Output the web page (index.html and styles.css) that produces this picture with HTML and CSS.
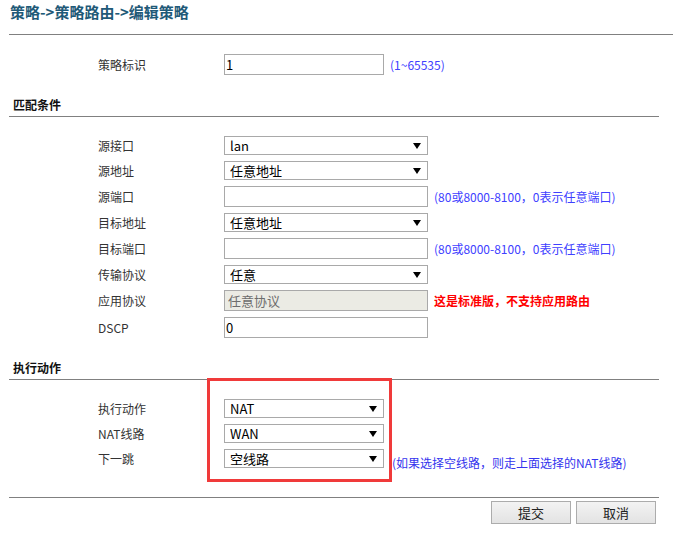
FILE: index.html
```html
<!DOCTYPE html>
<html lang="zh-CN">
<head>
    <meta charset="UTF-8">
    <title>编辑策略</title>
    <link rel="stylesheet" href="styles.css">
</head>
<body>
    <div class="page">
        <div class="title">策略-&gt;策略路由-&gt;编辑策略</div>

        <div class="section id-section">
            <div class="row row-input">
                <span class="label">策略标识</span>
                <input class="field short" type="text" value="1">
                <span class="hint">(1~65535)</span>
            </div>
        </div>

        <div class="section">
            <div class="heading">匹配条件</div>
            <div class="body">
                <div class="row">
                    <span class="label">源接口</span>
                    <div class="sel"><select><option>lan</option></select></div>
                </div>
                <div class="row">
                    <span class="label">源地址</span>
                    <div class="sel"><select><option>任意地址</option></select></div>
                </div>
                <div class="row row-input">
                    <span class="label">源端口</span>
                    <input class="field" type="text" value="">
                    <span class="hint">(80或8000-8100，0表示任意端口)</span>
                </div>
                <div class="row">
                    <span class="label">目标地址</span>
                    <div class="sel"><select><option>任意地址</option></select></div>
                </div>
                <div class="row row-input">
                    <span class="label">目标端口</span>
                    <input class="field" type="text" value="">
                    <span class="hint">(80或8000-8100，0表示任意端口)</span>
                </div>
                <div class="row">
                    <span class="label">传输协议</span>
                    <div class="sel"><select><option>任意</option></select></div>
                </div>
                <div class="row row-input">
                    <span class="label">应用协议</span>
                    <input class="field" type="text" value="任意协议" disabled>
                    <span class="warn">这是标准版，不支持应用路由</span>
                </div>
                <div class="row row-input">
                    <span class="label">DSCP</span>
                    <input class="field" type="text" value="0">
                </div>
            </div>
        </div>

        <div class="section action-section">
            <div class="heading">执行动作</div>
            <div class="body body-last">
                <div class="row">
                    <span class="label">执行动作</span>
                    <div class="sel short"><select><option>NAT</option></select></div>
                </div>
                <div class="row">
                    <span class="label">NAT线路</span>
                    <div class="sel short"><select><option>WAN</option></select></div>
                </div>
                <div class="row">
                    <span class="label">下一跳</span>
                    <div class="sel short"><select><option>空线路</option></select></div>
                    <span class="hint tight">(如果选择空线路，则走上面选择的NAT线路)</span>
                </div>
            </div>
            <div class="mark"></div>
        </div>

        <div class="buttons">
            <button type="button">提交</button>
            <button type="button">取消</button>
        </div>
    </div>
</body>
</html>
```

FILE: styles.css
```css
body {
    margin: 0;
    padding: 0;
    font-family: "Noto Sans CJK SC", "Liberation Sans", sans-serif;
    font-size: 12px;
    color: #333;
    background: #fff;
}

.page {
    margin-left: 9px;
}

.title {
    width: 664px;
    height: 34px;
    line-height: 24px;
    padding-left: 1px;
    box-sizing: border-box;
    border-bottom: 1px solid #808080;
    font-size: 15px;
    font-weight: bold;
    color: #1f5a78;
    height: 35px;
}

.section {
    width: 650px;
}

.id-section {
    margin-top: 16px;
}

.heading {
    margin-top: 16px;
    height: 22px;
    line-height: 22px;
    padding-left: 4px;
    font-weight: bold;
    color: #111;
    border-bottom: 1px solid #808080;
}

.body {
    padding-top: 16px;
}

.body-last {
    padding-bottom: 26px;
    border-bottom: 1px solid #808080;
}

.row {
    display: flex;
    align-items: center;
    height: 25px;
    padding-left: 89px;
}

.row-input {
    height: 27px;
}

.label {
    width: 126px;
    line-height: 16px;
}

.sel {
    position: relative;
    width: 204px;
    height: 19px;
}

.sel.short {
    width: 160px;
}

.sel::after {
    content: "";
    position: absolute;
    right: 7px;
    top: 7px;
    border-left: 4px solid transparent;
    border-right: 4px solid transparent;
    border-top: 6px solid #000;
    pointer-events: none;
}

.sel select {
    appearance: none;
    -webkit-appearance: none;
    width: 100%;
    height: 19px;
    margin: 0;
    padding: 0 0 0 5px;
    border: 1px solid #a9a9a9;
    border-radius: 0;
    background: #fff;
    font-family: "Noto Sans CJK SC", "Liberation Sans", sans-serif;
    font-size: 13px;
    line-height: 17px;
    color: #000;
}

.field {
    width: 204px;
    height: 21px;
    margin: 0;
    padding: 0 0 0 1px;
    box-sizing: border-box;
    border: 1px solid #a9a9a9;
    font-family: "Noto Sans CJK SC", "Liberation Sans", sans-serif;
    font-size: 13px;
    color: #000;
    background: #fff;
}

.field.short {
    width: 160px;
}

.field:disabled {
    background: #ebebe4;
    color: #6d6d6d;
    padding-left: 3px;
}

.hint {
    margin-left: 6px;
    color: #4040ff;
    line-height: 16px;
}

.hint.tight {
    margin-left: 8px;
    margin-top: 8px;
    color: #3535ee;
}

.warn {
    margin-left: 6px;
    color: #ff0000;
    font-weight: bold;
    line-height: 16px;
}

.action-section {
    position: relative;
}

.mark {
    position: absolute;
    left: 198px;
    top: 21px;
    width: 185px;
    height: 104px;
    box-sizing: border-box;
    border: 3px solid #f03a3a;
}

.buttons {
    width: 647px;
    display: flex;
    justify-content: flex-end;
    gap: 5px;
    margin-top: 3px;
}

.buttons button {
    width: 80px;
    height: 23px;
    margin: 0;
    padding: 0;
    border: 1px solid #acacac;
    border-radius: 0;
    background: linear-gradient(180deg, #f3f3f3, #e3e3e3);
    font-family: "Noto Sans CJK SC", "Liberation Sans", sans-serif;
    font-size: 13px;
    color: #222;
}
```
